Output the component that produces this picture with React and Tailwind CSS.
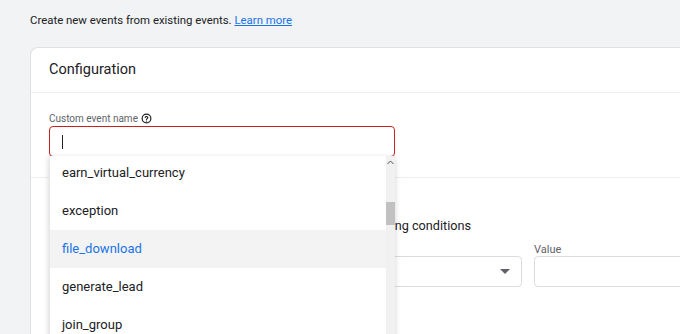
import React from 'react';

// Event names shown in the open dropdown
const eventOptions = [
  { id: 'earn_virtual_currency', active: false },
  { id: 'exception', active: false },
  { id: 'file_download', active: true },
  { id: 'generate_lead', active: false },
  { id: 'join_group', active: false },
  { id: 'level_end', active: false },
];

const HelpIcon = () => (
  <svg width="11" height="11" viewBox="0 0 24 24" className="ml-[3px]">
    <circle cx="12" cy="12" r="9.5" fill="none" stroke="#202124" strokeWidth="2.6" />
    <path d="M9.2 9.6a2.9 2.9 0 0 1 5.6 0.6c0 1.9-2.8 2.2-2.8 4.2" fill="none" stroke="#202124" strokeWidth="2.6" strokeLinecap="round" />
    <circle cx="12" cy="17.6" r="1.5" fill="#202124" />
  </svg>
);

const App = () => {
  return (
    <div className="w-[680px] h-[334px] overflow-hidden bg-[#f1f3f4] font-['Roboto',sans-serif] text-[#202124]">
      {/* Intro line */}
      <div className="pl-[30px] pt-[11px] h-[47px] text-[11.4px] leading-[18px]">
        Create new events from existing events.{' '}
        <a href="#" className="text-[#1a73e8] underline">Learn more</a>
      </div>

      {/* Card */}
      <div className="ml-[30px] w-[720px] h-[300px] bg-white rounded-tl-[8px] border-t border-l border-[#e0e0e0]">
        <div className="h-[45px] px-[18px] flex items-center text-[14.5px] border-b border-[#eeeeee]">
          Configuration
        </div>

        {/* Custom event name */}
        <div className="px-[18px] pt-[18px] pb-[20px] border-b border-[#eeeeee]">
          <div className="flex items-center h-[14px] text-[10px] text-[#5f6368]">
            Custom event name
            <HelpIcon />
          </div>
          <div className="relative mt-[1px] w-[346px] z-10">
            <div className="h-[31px] rounded-[4px] border border-[#c5221f] flex items-center pl-[12px]">
              <div className="w-[1px] h-[14px] bg-[#202124]" />
            </div>

            {/* Open dropdown */}
            <div className="absolute left-0 top-[30px] w-[346px] h-[190px] bg-white shadow-[0_2px_6px_rgba(0,0,0,0.18)] border-l border-[#e8e8e8] flex">
              <div className="flex-1 overflow-hidden">
                <div className="-mt-[2px]">
                  {eventOptions.map((opt) => (
                    <div
                      key={opt.id}
                      className={`h-[38px] flex items-center pl-[12px] text-[13px] ${opt.active ? 'bg-[#f3f3f3] text-[#1a73e8]' : 'text-[#202124]'}`}
                    >
                      {opt.id}
                    </div>
                  ))}
                </div>
              </div>
              {/* Scrollbar */}
              <div className="w-[9px] bg-[#f1f1f1] flex flex-col items-center">
                <svg width="7" height="5" viewBox="0 0 7 5" className="mt-[4px]">
                  <path d="M0.5 4 L3.5 1 L6.5 4" fill="none" stroke="#505050" strokeWidth="1" />
                </svg>
                <div className="mt-[37px] w-[9px] h-[23px] bg-[#c1c1c1]" />
              </div>
            </div>
          </div>
        </div>

        {/* Matching conditions */}
        <div className="px-[18px] pt-[19px]">
          <div className="text-[14px] font-medium h-[20px]">Matching conditions</div>
          <div className="text-[12.7px] leading-[18px] text-[#202124] whitespace-nowrap">
            Create custom event when an event matches all of the following conditions
          </div>
          <div className="mt-[5px] flex gap-[12px]">
            <div className="w-[478px]">
              <div className="text-[11px] text-[#5f6368] h-[16px] pt-[4px] leading-[12px]">Parameter</div>
              <div className="h-[31px] rounded-[4px] border border-[#dadce0] flex items-center justify-end pr-[11px]">
                <svg width="10" height="5" viewBox="0 0 10 5">
                  <path d="M0 0 L10 0 L5 5 Z" fill="#5f6368" />
                </svg>
              </div>
            </div>
            <div className="w-[200px]">
              <div className="text-[11px] text-[#5f6368] h-[16px] pt-[4px] leading-[12px]">Value</div>
              <div className="h-[31px] rounded-[4px] border border-[#dadce0]" />
            </div>
          </div>
        </div>
      </div>
    </div>
  );
};

export default App;
